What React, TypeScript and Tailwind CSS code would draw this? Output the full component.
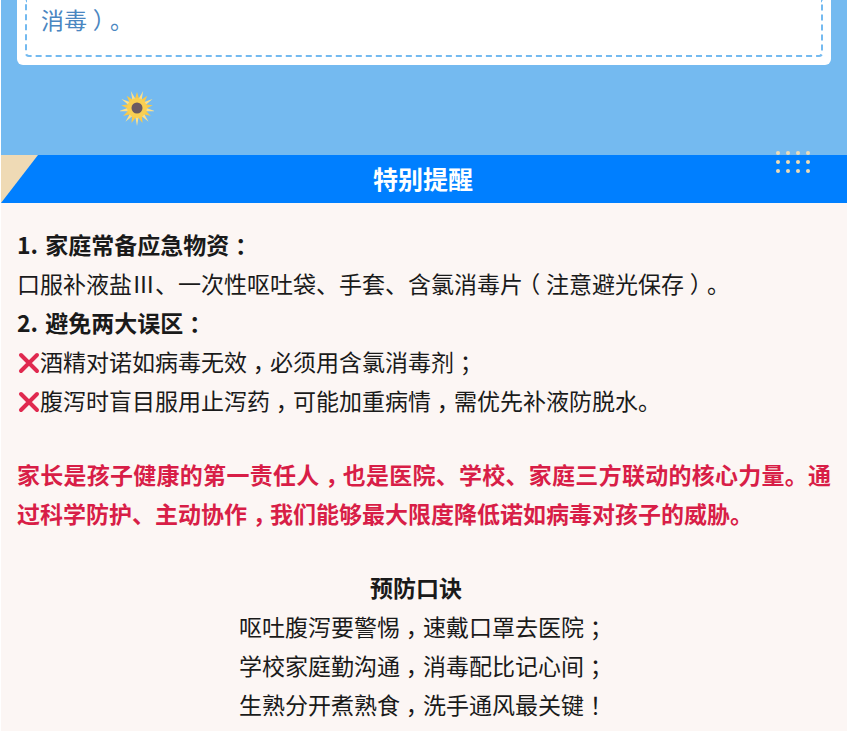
const font = "font-['Noto_Sans_CJK_SC',sans-serif]";

// marks are trimmed to half width (halt) and centred in a full-width box, as in the screenshot
function Zh({ text }: { text: string }) {
	return (
		<>
			{text.split(/([，；：！（）Ⅲ])/).map((part, i) => {
				if (part === "Ⅲ") return <span key={i} className="inline-block w-[1em] text-center">{part}</span>;
				if (part.length === 1 && "，；：！（）".includes(part))
					return (
						<span key={i} className="inline-block w-[1em] text-center [font-feature-settings:'halt']">
							{part}
						</span>
					);
				return part;
			})}
		</>
	);
}

function Sunflower() {
	const petals = Array.from({ length: 18 }, (_, i) => i * 20);
	return (
		<svg width="34" height="38" viewBox="0 0 34 38" className="block">
			{petals.map((a, i) => (
				<path
					key={a}
					d={i % 2 ? "M15 12 L17 1 L19 12 Z" : "M14 13 L17 3 L20 13 Z"}
					fill={i % 2 ? "#fde08a" : "#f8c94a"}
					transform={`rotate(${a} 17 19)`}
				/>
			))}
			<circle cx="17" cy="19" r="10" fill="#f9cf52" />
			<circle cx="17" cy="19" r="5.5" fill="#6b5a62" />
		</svg>
	);
}

function Dots() {
	return (
		<div className="grid grid-cols-4 gap-x-[6.1px] gap-y-[5px]">
			{Array.from({ length: 12 }, (_, i) => (
				<span key={i} className="w-[4px] h-[4px] rounded-full bg-[#efdcb4]" />
			))}
		</div>
	);
}

function Cross() {
	return (
		<svg width="23" height="23" viewBox="0 0 23 23" className="inline-block align-[-4px]">
			<path d="M4 3 L20 19 M20 3 L4 19" stroke="#e0294f" strokeWidth="4" strokeLinecap="round" />
		</svg>
	);
}

export default function App() {
	return (
		<div className={`w-full h-[731px] overflow-hidden bg-white pl-px [text-spacing-trim:space-all] ${font}`}>
			<section className="h-[155px] bg-[#74baf0] px-[16px]">
				<div className="bg-white rounded-b-[6px] px-[8px] pb-[8px]">
					<div className="h-[57px] border-x-2 border-b-2 border-dashed border-[#74baf0] rounded-b-[4px] px-[14px]">
						<p className="text-[23px] leading-[39px] text-[#4a86c1]"><Zh text="消毒）。" /></p>
					</div>
				</div>
				<div className="pl-[103px] pt-[24px]">
					<Sunflower />
				</div>
			</section>
			<div className="relative h-[48px] bg-[#007fff] flex items-center justify-center pr-[2px]">
				<span className="absolute left-0 top-0 w-0 h-0 border-t-[48px] border-r-[37px] border-t-[#efdab5] border-r-transparent" />
				<span className="absolute left-[775px] top-[-4px]">
					<Dots />
				</span>
				<h2 className="text-[25px] font-bold text-white">特别提醒</h2>
			</div>
			<div className="h-full bg-[#fcf6f4] px-[16px] pt-[22px] text-[23px] leading-[39px] text-[#1a1a1a]">
				<p className="font-bold [word-spacing:2px]"><Zh text="1. 家庭常备应急物资：" /></p>
				<p><Zh text="口服补液盐Ⅲ、一次性呕吐袋、手套、含氯消毒片（注意避光保存）。" /></p>
				<p className="font-bold [word-spacing:2px]"><Zh text="2. 避免两大误区：" /></p>
				<p><Cross /><Zh text="酒精对诺如病毒无效，必须用含氯消毒剂；" /></p>
				<p><Cross /><Zh text="腹泻时盲目服用止泻药，可能加重病情，需优先补液防脱水。" /></p>
				<p className="mt-[35px] font-bold text-[#d81e47] text-justify">
					<Zh text="家长是孩子健康的第一责任人，也是医院、学校、家庭三方联动的核心力量。通过科学防护、主动协作，我们能够最大限度降低诺如病毒对孩子的威胁。" />
				</p>
				<div className="mt-[35px] text-center pr-[2px]">
					<p className="font-bold pr-[14px]">预防口诀</p>
					<p><Zh text="呕吐腹泻要警惕，速戴口罩去医院；" /></p>
					<p><Zh text="学校家庭勤沟通，消毒配比记心间；" /></p>
					<p><Zh text="生熟分开煮熟食，洗手通风最关键！" /></p>
				</div>
			</div>
		</div>
	);
}
